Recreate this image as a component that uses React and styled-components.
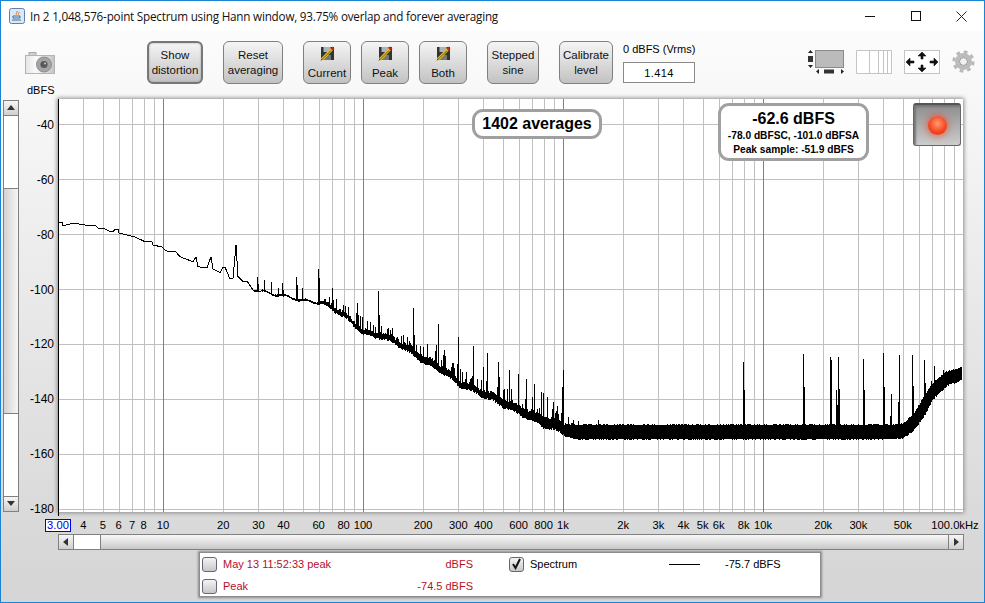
import React from "react";
import styled, { createGlobalStyle } from "styled-components";

const Global = createGlobalStyle`
  html, body { margin: 0; padding: 0; background: #fff; }
  * { box-sizing: border-box; }
`;

// plot scales, taken from the picture: 200px per decade, 2.75px per dB
const PLOT_W = 905;
const PLOT_H = 413;
const fx = (hz) => 105 + 200 * Math.log10(hz / 10);
const dbY = (db) => 25 + (-40 - db) * 2.75;

const lerp = (table, x) => {
  for (let i = 1; i < table.length; i++) {
    if (x <= table[i][0]) {
      const [x0, y0] = table[i - 1];
      const [x1, y1] = table[i];
      return y0 + ((y1 - y0) * (x - x0)) / (x1 - x0);
    }
  }
  return table[table.length - 1][1];
};

const LOW_LINE = [
  [58.5, 222], [62, 222], [63, 226], [70, 224], [77, 223.7], [85, 225], [93, 225.7], [95, 225], [98, 228], [105, 229],
  [110, 231.7], [113, 232], [115, 229], [118, 229], [119, 233], [130, 235.7], [135, 237], [145, 241.7], [152, 242],
  [153, 245], [162, 247], [165, 250], [169, 251.7], [176, 252], [180, 256.7], [193, 261.7], [196, 257], [198, 266.7],
  [207, 268], [211, 256.7], [213, 269], [220, 272.7], [223, 267], [225, 267], [230, 279], [233, 278], [236, 245],
  [238, 276.7], [243, 281.7], [247, 281], [253, 290],
];

const BAND_BOTTOM = [
  [253, 290], [285, 297], [305, 302], [323, 304], [343, 316], [363, 334], [383, 338], [400, 346], [420, 360], [445, 374], [458, 385],
  [483, 396], [503, 406], [520, 414], [543, 426], [563, 433], [573, 438.5], [893, 438.5], [903, 437], [913, 430], [923, 417],
  [933, 398], [947, 385], [962, 379],
];

const BAND_TOP = [
  [253, 289.5], [285, 296], [305, 300.5], [323, 302], [343, 313], [363, 331], [383, 334], [400, 342], [420, 355], [445, 369], [458, 381],
  [483, 391], [503, 400], [520, 408], [543, 418], [563, 424], [573, 425.5], [893, 425.5], [903, 424], [913, 415], [923, 398],
  [933, 383], [947, 372], [962, 368],
];

const SPIKES = [
  [257, 277], [258, 284], [264, 280], [271, 282], [278, 288], [282, 283], [283, 290], [296, 277], [297, 285], [302, 288],
  [318, 269], [319, 278], [332, 288], [333, 300], [343, 305], [357, 303], [358, 315], [378, 291], [379, 315], [413, 308], [414, 335],
  [423, 347], [427, 344], [436, 345], [438, 324], [443, 355], [444, 350], [452, 363], [457, 364], [458, 337], [465, 379],
  [471, 378], [473, 346], [477, 379], [483, 367], [487, 353], [498, 362], [499, 377], [503, 390], [509, 370], [518, 374],
  [526, 379], [532, 397], [534, 384], [541, 392], [543, 393], [547, 397], [553, 402], [557, 406], [563, 370], [562, 387],
  [568, 417], [573, 420], [578, 421], [598, 420], [743, 362], [744, 390], [803, 354], [804, 387], [830, 357], [831, 360],
  [836, 390], [837, 405], [838, 357], [839, 389], [863, 359], [864, 390], [883, 353], [884, 387], [891, 394], [890, 416],
  [899, 355], [898, 402], [912, 355], [913, 386], [924, 360], [925, 383], [931, 381], [934, 366], [943, 370],
];

const buildTrace = () => {
  let seed = 1402;
  const rnd = () => {
    seed = (seed * 1664525 + 1013904223) % 4294967296;
    return seed / 4294967296;
  };
  let d = "M" + LOW_LINE.map(([x, y]) => `${x - 58} ${y - 99}`).join("L");
  for (let x = 253; x < 962; x++) {
    const low = x < 323 ? 0.6 : 1.8;
    const wobble = x < 323 ? 1 : x < 573 ? 3 : 1.6;
    const drift = x < 573 ? Math.sin(x / 3.3) * 1.2 : 0;
    const top = lerp(BAND_TOP, x) - rnd() * wobble + drift;
    const bottom = lerp(BAND_BOTTOM, x) + rnd() * low + drift;
    d += `M${x - 57.5} ${top - 99}V${bottom - 99}`;
    // short harmonics sitting on the noise below 1k
    if (x > 323 && x < 570 && rnd() < 0.22) {
      d += `M${x - 57.5} ${top - 99 - 3 - rnd() * 9}V${top - 99}`;
    }
  }
  SPIKES.forEach(([x, y]) => {
    d += `M${x - 57.5} ${y - 99}V${lerp(BAND_BOTTOM, x) - 99}`;
  });
  return d;
};

const TRACE = buildTrace();

const MINOR = [];
[10, 100, 1000, 10000].forEach((dec) => {
  for (let m = 2; m < 10; m++) MINOR.push(dec * m);
});
[4, 5, 6, 7, 8, 9].forEach((m) => MINOR.push(m));
const DECADES = [10, 100, 1000, 10000];
const DB_LINES = [-40, -60, -80, -100, -120, -140, -160, -180];

const FREQ_LABELS = [
  [4, "4"], [5, "5"], [6, "6"], [7, "7"], [8, "8"], [10, "10"], [20, "20"], [30, "30"], [40, "40"], [60, "60"], [80, "80"],
  [100, "100"], [200, "200"], [300, "300"], [400, "400"], [600, "600"], [800, "800"], [1000, "1k"], [2000, "2k"], [3000, "3k"],
  [4000, "4k"], [5000, "5k"], [6000, "6k"], [8000, "8k"], [10000, "10k"], [20000, "20k"], [30000, "30k"], [50000, "50k"],
];

const Window = styled.div`
  width: 985px;
  height: 603px;
  overflow: hidden;
  display: flex;
  flex-direction: column;
  border: 1px solid #1a83d4;
  background: linear-gradient(#fcfcfc 5%, #d6d6d6 95%);
  font-family: "Liberation Sans", Arial, sans-serif;
  font-size: 11px;
  color: #000;
`;

const TitleBar = styled.div`
  height: 30px;
  flex: none;
  display: flex;
  align-items: center;
  background: #fff;
  padding-left: 8px;
`;

const TitleText = styled.span`
  margin-left: 5px;
  font-family: "Open Sans", "Noto Sans", sans-serif;
  font-size: 11.7px;
  letter-spacing: -0.21px;
  color: #111;
  white-space: nowrap;
`;

const WindowControls = styled.div`
  margin-left: auto;
  display: flex;
`;

const WindowControl = styled.div`
  width: 45.5px;
  height: 30px;
  display: flex;
  align-items: center;
  justify-content: center;
`;

const Toolbar = styled.div`
  height: 66px;
  flex: none;
  display: flex;
  align-items: flex-start;
  gap: 20px;
  padding: 10px 9px 0 0;
`;

const CameraColumn = styled.div`
  width: 126px;
  padding: 11px 0 0 24px;
  display: flex;
  flex-direction: column;
`;

const AxisUnit = styled.span`
  margin: 10px 0 0 2px;
  line-height: 12px;
  font-size: 11px;
`;

const Group = styled.div`
  display: flex;
  gap: 10px;
`;

const ToolButton = styled.div`
  width: ${(p) => p.$w}px;
  height: 43px;
  display: flex;
  flex-direction: column;
  align-items: center;
  justify-content: ${(p) => (p.$icon ? "space-between" : "center")};
  padding: ${(p) => (p.$icon ? "4px 0 2px" : "0")};
  text-align: center;
  font-size: 11.5px;
  line-height: 15px;
  color: #111;
  border: ${(p) => (p.$pressed ? "2px solid #777" : "1px solid #808080")};
  border-radius: 6px;
  background: linear-gradient(#f5f5f5, #c2c2c2);
  box-shadow: ${(p) => (p.$pressed ? "inset 0 0 2px #999" : "none")};
`;

const LevelField = styled.div`
  width: 72px;
  display: flex;
  flex-direction: column;
  align-items: stretch;
`;

const LevelLabel = styled.span`
  font-size: 11px;
  line-height: 13px;
  margin-top: 2px;
  white-space: nowrap;
`;

const LevelInput = styled.div`
  height: 21px;
  margin-top: 6px;
  background: #fff;
  border: 1px solid #8a8a8a;
  display: flex;
  align-items: center;
  justify-content: center;
  font-size: 11px;
  letter-spacing: 0.4px;
`;

const ViewIcons = styled.div`
  margin-left: auto;
  margin-top: 9px;
  display: flex;
  gap: 12px;
`;

const PlotRow = styled.div`
  height: 418px;
  flex: none;
  display: flex;
`;

const LeftRail = styled.div`
  width: 57px;
  flex: none;
  display: flex;
  padding: 3px 0 0 2px;
`;

const VScroll = styled.div`
  width: 16px;
  height: 412px;
  display: flex;
  flex-direction: column;
  border: 1px solid #808080;
  background: #fff;
`;

const ScrollButton = styled.div`
  flex: none;
  width: ${(p) => (p.$side ? "15px" : "auto")};
  height: ${(p) => (p.$side ? "auto" : "15px")};
  display: flex;
  align-items: center;
  justify-content: center;
  background: linear-gradient(#f6f6f6, #cfcfcf);
  border-bottom: ${(p) => (p.$pos === "up" ? "1px solid #808080" : "none")};
  border-top: ${(p) => (p.$pos === "down" ? "1px solid #808080" : "none")};
  border-right: ${(p) => (p.$pos === "left" ? "1px solid #808080" : "none")};
  border-left: ${(p) => (p.$pos === "right" ? "1px solid #808080" : "none")};
`;

const VThumb = styled.div`
  margin-top: 72px;
  height: 226px;
  background: linear-gradient(90deg, #d2d2d2, #f6f6f6);
  border-top: 1px solid #808080;
  border-bottom: 1px solid #808080;
`;

const Spacer = styled.div`
  flex: 1;
`;

const DbLabels = styled.div`
  flex: 1;
  height: 398px;
  margin-top: 18px;
  padding-right: 4px;
  display: flex;
  flex-direction: column;
  justify-content: space-between;
  align-items: flex-end;
  font-size: 12px;
  line-height: 14px;
`;

const PlotFrame = styled.div`
  position: relative;
  width: ${PLOT_W}px;
  height: ${PLOT_H}px;
  margin-top: 2px;
  background: #fff;
  box-shadow: 0 0 4px 1px #8c8c8c;
`;

const PlotSvg = styled.svg`
  display: block;
  overflow: visible;
`;

const AveragesBadge = styled.div`
  position: absolute;
  left: 414px;
  top: 10px;
  width: 130px;
  height: 30px;
  display: flex;
  align-items: center;
  justify-content: center;
  background: #fff;
  border: 3px solid #a0a0a0;
  border-radius: 11px;
  font-size: 16px;
  font-weight: bold;
`;

const LevelBadge = styled.div`
  position: absolute;
  left: 660px;
  top: 4px;
  width: 151px;
  height: 58px;
  display: flex;
  flex-direction: column;
  align-items: center;
  background: #fff;
  border: 3px solid #a0a0a0;
  border-radius: 11px;
  font-weight: bold;
  font-size: 10.2px;
  line-height: 13.5px;
  padding-top: 3px;
  white-space: nowrap;
`;

const LevelMain = styled.span`
  font-size: 16px;
  line-height: 20px;
`;

const RecordButton = styled.div`
  position: absolute;
  left: 855px;
  top: 4px;
  width: 48px;
  height: 43px;
  display: flex;
  align-items: center;
  justify-content: center;
  border-radius: 3px;
  border: 1px solid #666;
  border-top: 2px solid #555;
  background: linear-gradient(#8e8e8e, #cccccc);
  box-shadow: inset 2px 2px 2px #777;
`;

const Led = styled.div`
  width: 19px;
  height: 19px;
  border-radius: 50%;
  background: radial-gradient(circle at 50% 40%, #ff9a70, #f5421c 60%, #d8300f);
  box-shadow: 0 0 6px 2px rgba(240, 70, 40, 0.55);
`;

const Ruler = styled.div`
  position: relative;
  height: 19px;
  flex: none;
  font-size: 11.2px;
`;

const Tick = styled.span`
  position: absolute;
  top: 3px;
  line-height: 14px;
  transform: translateX(-50%);
  white-space: nowrap;
`;

const StartTick = styled(Tick)`
  top: 4px;
  width: 26px;
  height: 13px;
  line-height: 11px;
  text-align: center;
  color: #0000e0;
  border: 1px solid #0000e0;
  background: #fff;
`;

const HScroll = styled.div`
  width: 906px;
  height: 16px;
  flex: none;
  margin-left: 57px;
  display: flex;
  border: 1px solid #808080;
  background: #fff;
`;

const HThumb = styled.div`
  flex: 1;
  margin-left: 26px;
  background: linear-gradient(#f8f8f8, #c8c8c8);
  border-left: 1px solid #808080;
`;

const Legend = styled.div`
  width: 622px;
  height: 45px;
  flex: none;
  margin: 2px 0 0 198px;
  padding: 0 0 0 2px;
  display: grid;
  grid-template-columns: 305px 1fr;
  grid-template-rows: 22px 22px;
  background: #fff;
  border: 1px solid #8c8c8c;
  box-shadow: 0 0 2px 1px #8c8c8c;
  font-size: 11px;
`;

const LegendRow = styled.div`
  display: flex;
  align-items: center;
  padding-right: 34px;
  color: ${(p) => p.$color || "#000"};
`;

const CheckBox = styled.div`
  width: 15px;
  height: 15px;
  flex: none;
  display: flex;
  align-items: center;
  justify-content: center;
  border: 1px solid #667;
  border-radius: 3px;
  background: linear-gradient(#f4f4f4, #c8c8c8);
  margin-right: 6px;
`;

const LegendValue = styled.span`
  margin-left: auto;
`;

const SpectrumRow = styled(LegendRow)`
  padding: 0 0 0 2px;
`;

const SpectrumName = styled.span`
  width: 139px;
`;

const LegendLine = styled.div`
  width: 31px;
  height: 1px;
  background: #000;
  margin-right: 25px;
`;

const Triangle = ({ dir }) => {
  const pts = { up: "4,1 8,6 0,6", down: "0,1 8,1 4,6", left: "6,0 6,8 1,4", right: "2,0 2,8 7,4" };
  return (
    <svg width="8" height="8" viewBox="0 0 8 8">
      <polygon points={pts[dir]} fill="#333" />
    </svg>
  );
};

const JavaIcon = () => (
  <svg width="16" height="16" viewBox="0 0 16 16">
    <rect x="0.5" y="0.5" width="15" height="15" rx="2" fill="#dce8f4" stroke="#5d83aa" />
    <path d="M8 3c1 1.4-1.6 2.2-.6 3.6M10 4c.6 1-1 1.6-.5 2.6" stroke="#e0701c" fill="none" />
    <path d="M4 8h7v2H4zM3 12h9" stroke="#3b6ea5" fill="none" />
  </svg>
);

const SaveIcon = () => (
  <svg width="15" height="15" viewBox="0 0 15 15" style={{ flex: "none" }}>
    <path d="M1 1h13v13H1z" fill="#333" />
    <rect x="3.5" y="1" width="7" height="5" fill="#a8b4c0" />
    <rect x="4" y="9" width="7" height="5" fill="#777" />
    <path d="M2 13.5L12 3" stroke="#e8c020" strokeWidth="3" />
    <path d="M1 14.5L11 4.5" stroke="#6a5810" strokeWidth="1" />
    <path d="M11.5 3.5L13.5 1.5" stroke="#d02020" strokeWidth="2.5" />
  </svg>
);

const CameraIcon = () => (
  <svg width="30" height="22" viewBox="0 0 30 22">
    <defs>
      <linearGradient id="camBody" x1="0" x2="1" y1="0" y2="0">
        <stop offset="0" stopColor="#e4e4e4" />
        <stop offset="0.35" stopColor="#fafafa" />
        <stop offset="1" stopColor="#c4c4c4" />
      </linearGradient>
    </defs>
    <rect x="4" y="0.5" width="7" height="4" fill="#d0d0d0" stroke="#aaa" />
    <rect x="0.5" y="3.5" width="29" height="18" fill="url(#camBody)" stroke="#b4b4b4" />
    <circle cx="19" cy="12.5" r="7.5" fill="#a4a4a4" stroke="#8c8c8c" />
    <circle cx="19" cy="12.5" r="3.6" fill="#55585e" />
    <circle cx="20" cy="11.5" r="1" fill="#c8ccd8" />
  </svg>
);

const LayoutIcon = () => (
  <svg width="36" height="24" viewBox="0 0 36 24">
    <rect x="7.5" y="0.5" width="28" height="17" fill="#bbb" stroke="#8a8a8a" />
    <polygon points="2.5,0 5,3 0,3" fill="#222" />
    <rect x="0" y="6" width="5" height="6" fill="#333" />
    <polygon points="0,15 5,15 2.5,18" fill="#222" />
    <polygon points="11,19 11,24 8,21.5" fill="#222" />
    <rect x="16" y="19.5" width="10" height="4" fill="#333" />
    <polygon points="33,19 33,24 36,21.5" fill="#222" />
  </svg>
);

const GridIcon = () => (
  <svg width="36" height="24" viewBox="0 0 36 24">
    <path d="M.5.5h35v23H.5zM13.5.5v23M22.5.5v23M27.5.5v23M31.5.5v23" fill="#fff" stroke="#c4c4c4" />
  </svg>
);

const MoveIcon = () => (
  <svg width="36" height="24" viewBox="0 0 36 24">
    <rect x="0.5" y="0.5" width="35" height="23" fill="#fff" stroke="#c4c4c4" />
    <path
      d="M18 2l4 4h-3v3h-2V6h-3zM18 22l4-4h-3v-3h-2v3h-3zM2 12l4-4v3h4v2H6v3zM34 12l-4-4v3h-4v2h4v3z"
      fill="#111"
      stroke="#111"
      strokeWidth="0.6"
    />
  </svg>
);

const GearIcon = () => (
  <svg width="23" height="23" viewBox="0 0 23 23">
    <circle cx="11.5" cy="11.5" r="9.6" fill="none" stroke="#b8b8b8" strokeWidth="3" strokeDasharray="3.7 3.84" />
    <circle cx="11.5" cy="11.5" r="6.5" fill="none" stroke="#bcbcbc" strokeWidth="4" />
    <circle cx="11.5" cy="11.5" r="4" fill="#f0f0f0" stroke="#8c8c8c" />
  </svg>
);

const Plot = () => (
  <PlotSvg width={PLOT_W} height={PLOT_H} viewBox={`0 0 ${PLOT_W} ${PLOT_H}`} shapeRendering="crispEdges">
    {DB_LINES.map((db) => (
      <line key={db} x1="0" x2={PLOT_W} y1={dbY(db) + 0.5} y2={dbY(db) + 0.5} stroke="#c0c0c0" />
    ))}
    {MINOR.map((hz) => (
      <line key={hz} x1={Math.round(fx(hz)) + 0.5} x2={Math.round(fx(hz)) + 0.5} y1="0" y2={PLOT_H} stroke="#c0c0c0" />
    ))}
    {DECADES.map((hz) => (
      <line key={hz} x1={fx(hz) + 0.5} x2={fx(hz) + 0.5} y1="0" y2={PLOT_H} stroke="#808080" />
    ))}
    <line x1="0.5" x2="0.5" y1="0" y2={PLOT_H + 4} stroke="#000" strokeWidth="1.5" />
    <path d={TRACE} fill="none" stroke="#000" strokeWidth="1" />
  </PlotSvg>
);

const CheckMark = () => (
  <svg width="11" height="12" viewBox="0 0 11 12">
    <path d="M2 6l2.5 4L9 1" fill="none" stroke="#111" strokeWidth="2" />
  </svg>
);

export default function App() {
  return (
    <>
      <Global />
      <Window>
        <TitleBar>
          <JavaIcon />
          <TitleText>In 2 1,048,576-point Spectrum using Hann window, 93.75% overlap and forever averaging</TitleText>
          <WindowControls>
            <WindowControl>
              <svg width="10" height="10" viewBox="0 0 10 10" shapeRendering="crispEdges">
                <path d="M0 5.5h10" stroke="#111" />
              </svg>
            </WindowControl>
            <WindowControl>
              <svg width="10" height="10" viewBox="0 0 10 10" shapeRendering="crispEdges">
                <rect x="0.5" y="0.5" width="9" height="9" fill="none" stroke="#111" />
              </svg>
            </WindowControl>
            <WindowControl>
              <svg width="11" height="11" viewBox="0 0 11 11">
                <path d="M.5.5l10 10M10.5.5l-10 10" stroke="#222" />
              </svg>
            </WindowControl>
          </WindowControls>
        </TitleBar>

        <Toolbar>
          <CameraColumn>
            <CameraIcon />
            <AxisUnit>dBFS</AxisUnit>
          </CameraColumn>
          <ToolButton $w={56} $pressed>
            Show
            <br />
            distortion
          </ToolButton>
          <ToolButton $w={60}>
            Reset
            <br />
            averaging
          </ToolButton>
          <Group>
            <ToolButton $w={48} $icon>
              <SaveIcon />
              Current
            </ToolButton>
            <ToolButton $w={48} $icon>
              <SaveIcon />
              Peak
            </ToolButton>
            <ToolButton $w={48} $icon>
              <SaveIcon />
              Both
            </ToolButton>
          </Group>
          <ToolButton $w={52}>
            Stepped
            <br />
            sine
          </ToolButton>
          <Group>
            <ToolButton $w={54}>
              Calibrate
              <br />
              level
            </ToolButton>
            <LevelField>
              <LevelLabel>0 dBFS (Vrms)</LevelLabel>
              <LevelInput>1.414</LevelInput>
            </LevelField>
          </Group>
          <ViewIcons>
            <LayoutIcon />
            <GridIcon />
            <MoveIcon />
            <GearIcon />
          </ViewIcons>
        </Toolbar>

        <PlotRow>
          <LeftRail>
            <VScroll>
              <ScrollButton $pos="up">
                <Triangle dir="up" />
              </ScrollButton>
              <VThumb />
              <Spacer />
              <ScrollButton $pos="down">
                <Triangle dir="down" />
              </ScrollButton>
            </VScroll>
            <DbLabels>
              {DB_LINES.map((db) => (
                <span key={db}>{db}</span>
              ))}
            </DbLabels>
          </LeftRail>
          <PlotFrame>
            <Plot />
            <AveragesBadge>1402 averages</AveragesBadge>
            <LevelBadge>
              <LevelMain>-62.6 dBFS</LevelMain>
              <span>-78.0 dBFSC, -101.0 dBFSA</span>
              <span>Peak sample: -51.9 dBFS</span>
            </LevelBadge>
            <RecordButton>
              <Led />
            </RecordButton>
          </PlotFrame>
        </PlotRow>

        <Ruler>
          <StartTick style={{ left: 57 }}>3.00</StartTick>
          {FREQ_LABELS.map(([hz, text]) => (
            <Tick key={hz} style={{ left: 57 + fx(hz) }}>
              {text}
            </Tick>
          ))}
          <Tick style={{ left: 954 }}>100.0kHz</Tick>
        </Ruler>

        <HScroll>
          <ScrollButton $side $pos="left">
            <Triangle dir="left" />
          </ScrollButton>
          <HThumb />
          <ScrollButton $side $pos="right">
            <Triangle dir="right" />
          </ScrollButton>
        </HScroll>

        <Legend>
          <LegendRow $color="#b4102c">
            <CheckBox />
            May 13 11:52:33 peak
            <LegendValue>dBFS</LegendValue>
          </LegendRow>
          <SpectrumRow>
            <CheckBox>
              <CheckMark />
            </CheckBox>
            <SpectrumName>Spectrum</SpectrumName>
            <LegendLine />
            -75.7 dBFS
          </SpectrumRow>
          <LegendRow $color="#b4102c">
            <CheckBox />
            Peak
            <LegendValue>-74.5 dBFS</LegendValue>
          </LegendRow>
        </Legend>
      </Window>
    </>
  );
}
